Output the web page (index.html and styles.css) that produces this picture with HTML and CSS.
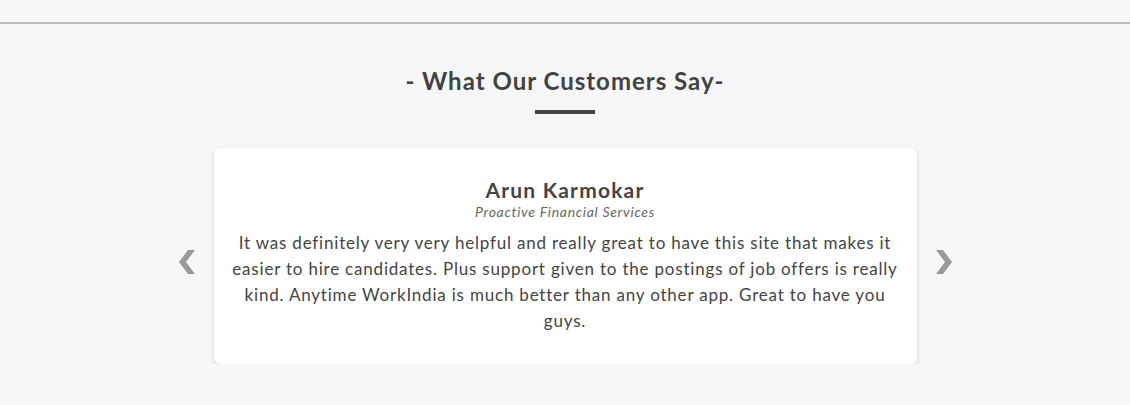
FILE: index.html
```html
<!DOCTYPE html>
<html>
<head>
<meta charset="utf-8">
<link rel="stylesheet" href="styles.css">
</head>
<body>
<div class="top-rule"></div>
<section class="testimonials">
  <h2 class="title">- What Our Customers Say-</h2>
  <div class="title-bar"></div>
  <div class="carousel">
    <button class="arrow" aria-label="Previous">
      <svg width="18" height="24" viewBox="0 0 18 24"><polygon points="10,0 17,0 8,12 17,24 10,24 1,12" fill="#9a9a9a"/></svg>
    </button>
    <div class="card">
      <div class="name">Arun Karmokar</div>
      <div class="company">Proactive Financial Services</div>
      <p class="quote">It was definitely very very helpful and really great to have this site that makes it easier to hire candidates. Plus support given to the postings of job offers is really kind. Anytime WorkIndia is much better than any other app. Great to have you guys.</p>
    </div>
    <button class="arrow" aria-label="Next">
      <svg width="18" height="24" viewBox="0 0 18 24"><polygon points="8,0 1,0 10,12 1,24 8,24 17,12" fill="#9a9a9a"/></svg>
    </button>
  </div>
</section>
</body>
</html>
```

FILE: styles.css
```css
html, body {
  margin: 0;
  padding: 0;
  background: #f7f7f9;
  font-family: "Lato", "Noto Sans", sans-serif;
  color: #444;
}
.top-rule {
  height: 22px;
  border-bottom: 2px solid #bcbcbf;
}
.testimonials {
  padding-top: 42px;
}
.title {
  margin: 0;
  text-align: center;
  font-size: 24px;
  line-height: 30px;
  font-weight: 700;
  letter-spacing: 1px;
  color: #424242;
}
.title-bar {
  width: 60px;
  height: 4px;
  background: #444;
  margin: 14px auto 0;
}
.carousel {
  display: flex;
  justify-content: center;
  align-items: center;
  margin-top: 34px;
}
.arrow {
  background: none;
  border: 0;
  padding: 0;
  width: 18px;
  height: 24px;
  display: flex;
  margin-top: 12px;
}
.arrow:first-child { margin-right: 18px; }
.arrow:last-child { margin-left: 18px; }
.card {
  width: 703px;
  box-sizing: border-box;
  background: #fff;
  border-radius: 6px;
  box-shadow: 0 2px 5px rgba(0,0,0,0.16);
  padding: 29px 16px 30px;
  text-align: center;
}
.name {
  font-size: 21px;
  line-height: 26px;
  font-weight: 700;
  letter-spacing: 1.2px;
  color: #444;
}
.company {
  font-size: 14px;
  line-height: 18px;
  font-style: italic;
  letter-spacing: 0.7px;
  color: #666;
  margin-top: 0;
}
.quote {
  margin: 9px 0 0;
  font-size: 17px;
  line-height: 26px;
  letter-spacing: 0.8px;
  color: #444;
}
```
